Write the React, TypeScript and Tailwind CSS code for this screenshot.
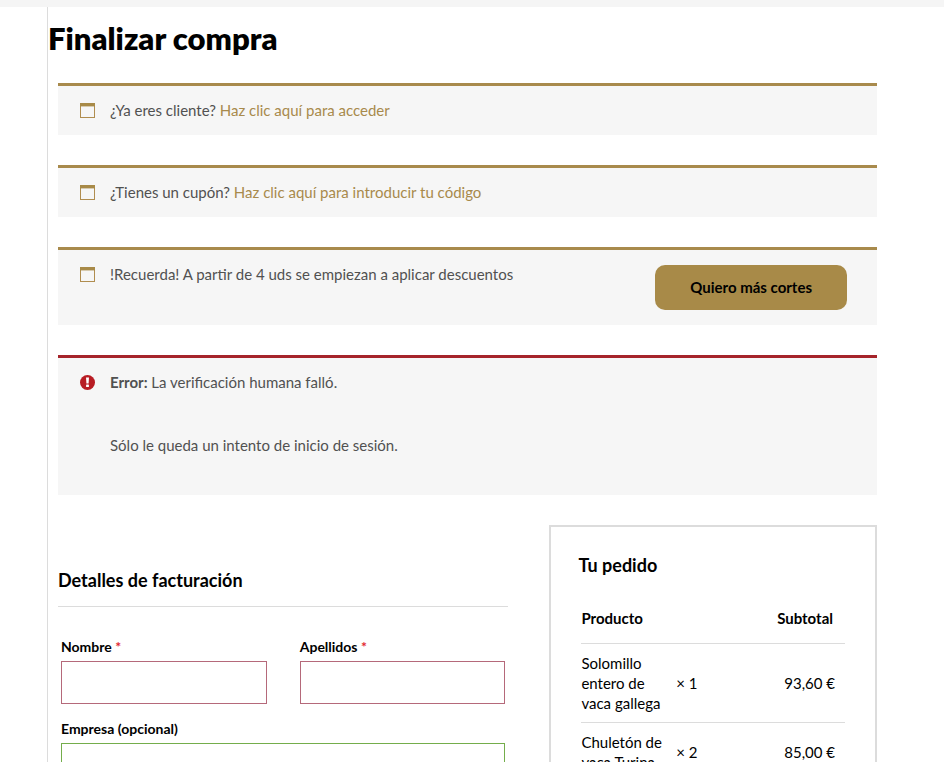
import type { ReactNode } from "react";

type Item = {
  name: string;
  quantity: number;
  subtotal: string;
};

const items: Item[] = [
  { name: "Solomillo entero de vaca gallega", quantity: 1, subtotal: "93,60 €" },
  { name: "Chuletón de vaca Turina", quantity: 2, subtotal: "85,00 €" },
];

function InfoIcon() {
  return (
    <svg width="15" height="15" viewBox="0 0 15 15" aria-hidden="true" className="mt-[2px] shrink-0">
      <rect x="0.5" y="0.5" width="14" height="14" fill="none" stroke="#b08d4f" />
      <rect width="15" height="3.4" fill="#a88a48" />
    </svg>
  );
}

function ErrorIcon() {
  return (
    <svg width="15" height="15" viewBox="0 0 15 15" aria-hidden="true" className="mt-[2px] shrink-0">
      <circle cx="7.5" cy="7.5" r="7.5" fill="#b81c23" />
      <path d="M6 2.4h3l-.4 6.2H6.4z" fill="#fff" />
      <rect x="6.1" y="9.6" width="2.8" height="2.5" rx="0.4" fill="#fff" />
    </svg>
  );
}

function Notice({ error, children }: { error?: boolean; children: ReactNode }) {
  return (
    <div
      className={`mb-[30px] flex gap-[15px] border-t-3 bg-[#f6f6f6] py-[15px] pr-[30px] pl-[22px] text-[15px] leading-[19px] text-[#515151] ${
        error ? "border-[#a5242a]" : "border-[#a88a4c]"
      }`}
    >
      {error ? <ErrorIcon /> : <InfoIcon />}
      {children}
    </div>
  );
}

type FieldProps = {
  id: string;
  label: string;
  required?: boolean;
  className?: string;
};

function Field({ id, label, required, className }: FieldProps) {
  return (
    <div className={className}>
      <label htmlFor={id} className="block pb-1 text-[14px] leading-5 font-bold">
        {label}
        {required && <span className="text-[#e2262e]"> *</span>}
      </label>
      <input
        id={id}
        type="text"
        className={`block h-[43px] w-full border bg-white px-3 text-[15px] outline-none ${
          required ? "border-[#b5697a]" : "border-[#74ad4b]"
        }`}
      />
    </div>
  );
}

export default function App() {
  return (
    <div className="bg-white font-['Lato',sans-serif] text-black">
      <div className="h-[7px] bg-[#f5f5f5]" />
      <main className="mr-[57px] ml-[47px] border-l border-[#dcdcdc] pb-10">
        <h1 className="pt-[11px] pb-[25px] text-[31px] leading-10 font-extrabold">Finalizar compra</h1>

        <div className="px-[10px]">
          <Notice>
            <p>
              ¿Ya eres cliente?{" "}
              <a href="#login" className="text-[#a88a4c]">
                Haz clic aquí para acceder
              </a>
            </p>
          </Notice>
          <Notice>
            <p>
              ¿Tienes un cupón?{" "}
              <a href="#coupon" className="text-[#a88a4c]">
                Haz clic aquí para introducir tu código
              </a>
            </p>
          </Notice>
          <Notice>
            <p className="flex-1">!Recuerda! A partir de 4 uds se empiezan a aplicar descuentos</p>
            <button
              type="button"
              className="h-[45px] rounded-[10px] bg-[#a88a48] px-[35px] text-[15px] font-bold text-black"
            >
              Quiero más cortes
            </button>
          </Notice>
          <Notice error>
            <div className="pb-[25px]">
              <p>
                <strong>Error:</strong> La verificación humana falló.
              </p>
              <p className="mt-11">Sólo le queda un intento de inicio de sesión.</p>
            </div>
          </Notice>

          <form className="flex items-start justify-between">
            <section className="w-[55%] pt-10">
              <h3 className="border-b border-[#dcdcdc] pt-[3px] pb-[14px] text-[18px] leading-6 font-bold">
                Detalles de facturación
              </h3>
              <div className="grid grid-cols-2 gap-x-[33px] gap-y-[15px] px-[3px] pt-[30px]">
                <Field id="first-name" label="Nombre" required />
                <Field id="last-name" label="Apellidos" required />
                <Field id="company" label="Empresa (opcional)" className="col-span-2" />
              </div>
            </section>

            <section className="w-[40%] border-2 border-[#dcdcdc] px-[27px] py-[26px]">
              <h3 className="text-[18px] leading-6 font-bold">Tu pedido</h3>
              <div className="px-[3px] pt-[22px]">
                <table className="w-full table-fixed text-[15px] leading-5">
                  <colgroup>
                    <col className="w-[36%]" />
                    <col className="w-[24%]" />
                    <col className="w-[40%]" />
                  </colgroup>
                  <thead>
                    <tr className="border-b border-[#dcdcdc]">
                      <th colSpan={2} className="pt-[9px] pb-[15px] text-left font-bold">
                        Producto
                      </th>
                      <th className="pt-[9px] pr-3 pb-[15px] text-right font-bold">Subtotal</th>
                    </tr>
                  </thead>
                  <tbody>
                    {items.map((item) => (
                      <tr key={item.name} className="border-b border-[#dcdcdc]">
                        <td className="py-[9px] pr-1">{item.name}</td>
                        <td>× {item.quantity}</td>
                        <td className="pr-[10px] text-right whitespace-nowrap">{item.subtotal}</td>
                      </tr>
                    ))}
                  </tbody>
                </table>
              </div>
            </section>
          </form>
        </div>
      </main>
    </div>
  );
}
